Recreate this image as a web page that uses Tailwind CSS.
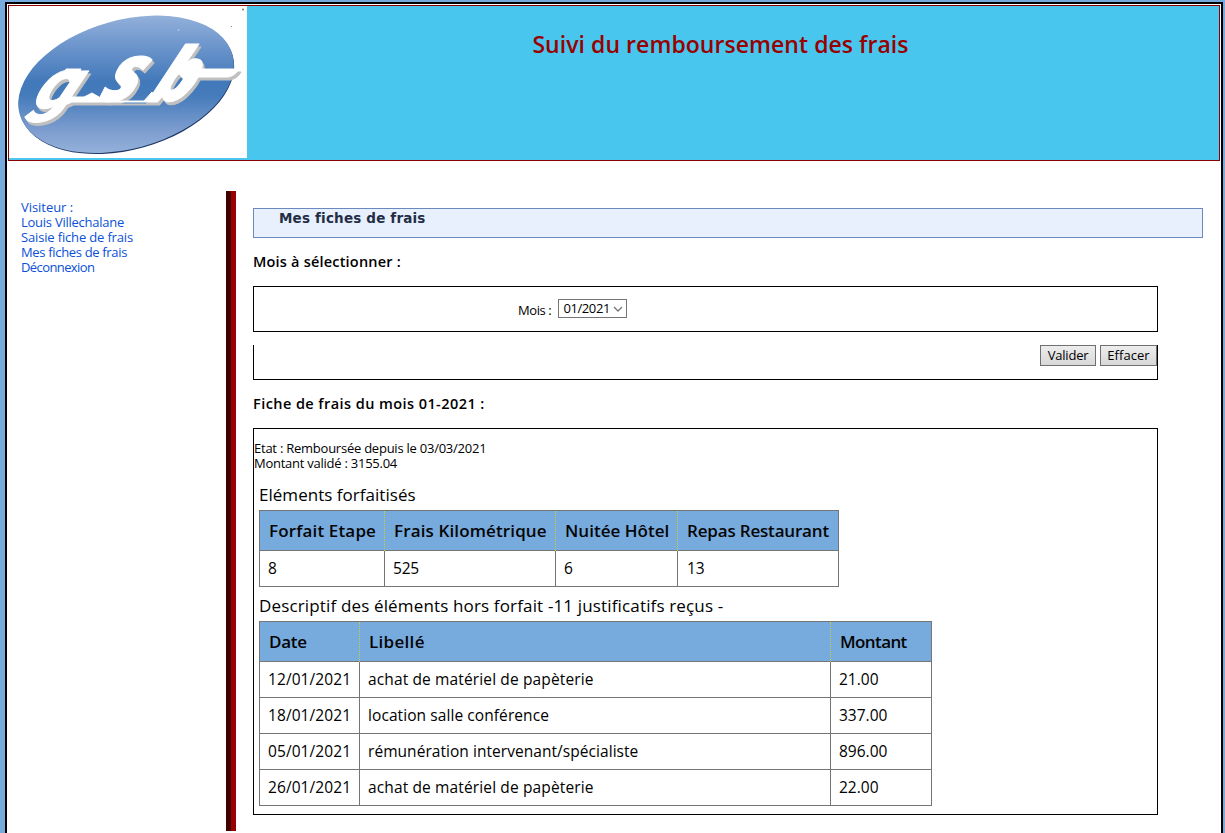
<!DOCTYPE html>
<html lang="fr">
<head>
<meta charset="utf-8">
<title>Suivi du remboursement des frais</title>
<script src="https://cdn.jsdelivr.net/npm/@tailwindcss/browser@4"></script>
</head>
<body class="h-[833px] overflow-hidden bg-[#77aadd] pt-0.5 pr-0.5 pl-[5px] font-['Open_Sans',sans-serif] text-[13px] leading-[15px] text-black">
<div class="h-[840px] border-2 border-black bg-white p-px">
  <header class="flex h-[156px] border border-[#8b0000] bg-[#48c6ee]">
    <svg class="h-[152px] w-[238px] shrink-0 bg-white" viewBox="9 6 238 152" role="img" aria-label="gsb">
      <defs>
        <linearGradient id="oval" gradientUnits="userSpaceOnUse" x1="126" y1="16" x2="126" y2="153" gradientTransform="rotate(15.65 126 84.5)">
          <stop offset="0" stop-color="#92b0da"/><stop offset=".22" stop-color="#6c95cc"/><stop offset=".48" stop-color="#4279ba"/><stop offset=".58" stop-color="#457bbb"/><stop offset=".85" stop-color="#809fd0"/><stop offset="1" stop-color="#93b1da"/>
        </linearGradient>
        <g id="mark" stroke-linejoin="round" font-weight="800" font-style="italic">
          <text transform="matrix(1.05 0 -.5 1 30 108)" font-family="Roboto, sans-serif" font-size="70" stroke-width="1">g</text>
          <text transform="matrix(.9 0 -.5 1 97 101)" font-family="Open Sans, sans-serif" font-size="80" stroke-width="1">s</text>
          <text transform="matrix(.95 0 -.46 1 147 101)" font-family="Open Sans, sans-serif" font-size="75" stroke-width="1">b</text>
          <path d="M64 97H84L92 93 106 101H144L152 92 158 102H72L58 108ZM174 69H239C236 74 233 76 228 77H196L184 79ZM66 69H81L77 76H64Z"/>
        </g>
      </defs>
      <ellipse cx="126.500" cy="85.200" rx="110.300" ry="64.500" transform="rotate(-15.65 126.5 85.2)" fill="#1d3762"/>
      <ellipse cx="126" cy="84.300" rx="110.500" ry="64.300" transform="rotate(-15.65 126 84.3)" fill="url(#oval)"/>
      <use href="#mark" x="2" y="3" fill="#c0c0c0" stroke="#c0c0c0"/>
      <use href="#mark" fill="#fff" stroke="#fff"/>
      <circle cx="243" cy="9.500" r="1" fill="#777"/><circle cx="231.500" cy="26.500" r=".6" fill="#777"/><circle cx="178.500" cy="30" r="1" fill="#a9c5e8"/>
    </svg>
    <h1 class="flex-1 pt-[22px] pr-[25px] text-center text-[23px] leading-8 font-semibold tracking-[0.05px] text-[#990000]">Suivi du remboursement des frais</h1>
  </header>

  <div class="mt-[30px] flex">
    <nav class="w-[218px] pt-[9px] pl-[13px] text-[#0a50d8]">
      <ul>
        <li class="tracking-[-0.05px]">Visiteur :</li>
        <li class="tracking-[-0.25px]">Louis Villechalane</li>
        <li class="tracking-[-0.16px]"><a class="block">Saisie fiche de frais</a></li>
        <li class="tracking-[-0.33px]"><a class="block">Mes fiches de frais</a></li>
        <li class="tracking-[-0.6px]"><a class="block">Déconnexion</a></li>
      </ul>
    </nav>

    <main class="ml-[5px] h-[640px] flex-1 border-l-5 border-[#990000] pt-[17px] pl-[17px] shadow-[-5px_0_0_#400000]">
      <h2 class="h-[30px] w-[950px] border border-[#6a8abf] bg-[#e8f0fe] pt-px pl-[25px] font-['DejaVu_Sans',sans-serif] text-[13.500px] leading-4 font-bold tracking-[0.18px] text-[#222e44]">Mes fiches de frais</h2>

      <h3 class="mt-[14px] h-5 text-[14.500px] leading-5 font-semibold tracking-[0.2px]">Mois à sélectionner :</h3>
      <div class="mt-[14px] flex h-[46px] w-[905px] items-start border border-black pt-3 pl-[264px]">
        <label class="pt-[4px] tracking-[-0.4px]">Mois :</label>
        <div class="ml-[7px] flex h-[19px] w-[69px] items-center border border-[#767676] pl-1 tracking-[-0.4px]">
          <span class="w-[50px]">01/2021</span>
          <svg class="mt-px h-[6px] w-[10px]" viewBox="0 0 10 6" fill="none" stroke="#777" stroke-width="1.300"><path d="M1 1l4 4 4-4"/></svg>
        </div>
      </div>

      <div class="mt-[13px] flex h-[35px] w-[905px] items-start justify-end gap-1 border-x border-b border-black">
        <button class="h-[21px] w-14 border border-[#707070] bg-linear-to-b from-[#ededed] to-[#d8d8d8] tracking-[-0.2px]">Valider</button>
        <button class="h-[21px] w-[57px] border border-[#707070] bg-linear-to-b from-[#ededed] to-[#d8d8d8] tracking-[0.05px]">Effacer</button>
      </div>

      <h3 class="mt-[14px] h-5 text-[14.500px] leading-5 font-semibold tracking-[0.43px]">Fiche de frais du mois 01-2021 :</h3>
      <section class="mt-[14px] h-[387px] w-[905px] border border-black pt-3">
        <p class="tracking-[-0.24px]">Etat : Remboursée depuis le 03/03/2021</p>
        <p class="tracking-[-0.25px]">Montant validé : 3155.04</p>

        <div class="pl-[5px] text-[15.500px] tracking-[0px]">
          <h4 class="mt-[12px] text-[17px] leading-6 tracking-[0.03px]">Eléments forfaitisés</h4>
          <div class="mt-[3px] w-[580px] border-t border-l border-[#757575]">
            <div class="grid h-10 grid-cols-[125px_171px_122px_161px] border-b border-[#757575] bg-[#77aadd] text-[17px] leading-10 font-semibold text-[#050505] *:border-r *:border-[#bfd040] *:pl-[9px] *:whitespace-nowrap *:[border-right-style:dotted]">
              <div class="tracking-[0.15px]">Forfait Etape</div><div class="tracking-[0.13px]">Frais Kilométrique</div><div class="tracking-[0.02px]">Nuitée Hôtel</div><div class="border-solid! border-[#757575]! tracking-[-0.18px]">Repas Restaurant</div>
            </div>
            <div class="grid h-9 grid-cols-[125px_171px_122px_161px] border-b border-[#757575] leading-[35px] tracking-[-0.2px] *:border-r *:border-[#757575] *:pl-2">
              <div>8</div><div>525</div><div>6</div><div class="pl-[9px]!">13</div>
            </div>
          </div>

          <h4 class="mt-[7px] text-[17px] leading-6 tracking-[0.15px]">Descriptif des éléments hors forfait -11 justificatifs reçus -</h4>
          <div class="mt-[3px] w-[673px] border-t border-l border-[#757575] *:grid *:grid-cols-[100px_471px_101px] *:border-b *:border-[#757575]">
            <div class="h-10 bg-[#77aadd] text-[17px] leading-10 font-semibold text-[#050505] *:border-r *:border-[#bfd040] *:pl-[9px] *:[border-right-style:dotted]">
              <div class="tracking-[-0.25px]">Date</div><div class="tracking-[0.3px]">Libellé</div><div class="border-solid! border-[#757575]! tracking-[-0.6px]">Montant</div>
            </div>
            <div class="h-9 leading-[35px] *:border-r *:border-[#757575] *:pl-2"><div class="tracking-[0.08px]">12/01/2021</div><div class="tracking-[0.13px]">achat de matériel de papèterie</div><div>21.00</div></div>
            <div class="h-9 leading-[35px] *:border-r *:border-[#757575] *:pl-2"><div class="tracking-[0.08px]">18/01/2021</div><div class="tracking-[0.08px]">location salle conférence</div><div>337.00</div></div>
            <div class="h-9 leading-[35px] *:border-r *:border-[#757575] *:pl-2"><div class="tracking-[0.08px]">05/01/2021</div><div class="tracking-[0.05px]">rémunération intervenant/spécialiste</div><div>896.00</div></div>
            <div class="h-9 leading-[35px] *:border-r *:border-[#757575] *:pl-2"><div class="tracking-[0.08px]">26/01/2021</div><div class="tracking-[0.13px]">achat de matériel de papèterie</div><div>22.00</div></div>
          </div>
        </div>
      </section>
    </main>
  </div>
</div>
</body>
</html>
